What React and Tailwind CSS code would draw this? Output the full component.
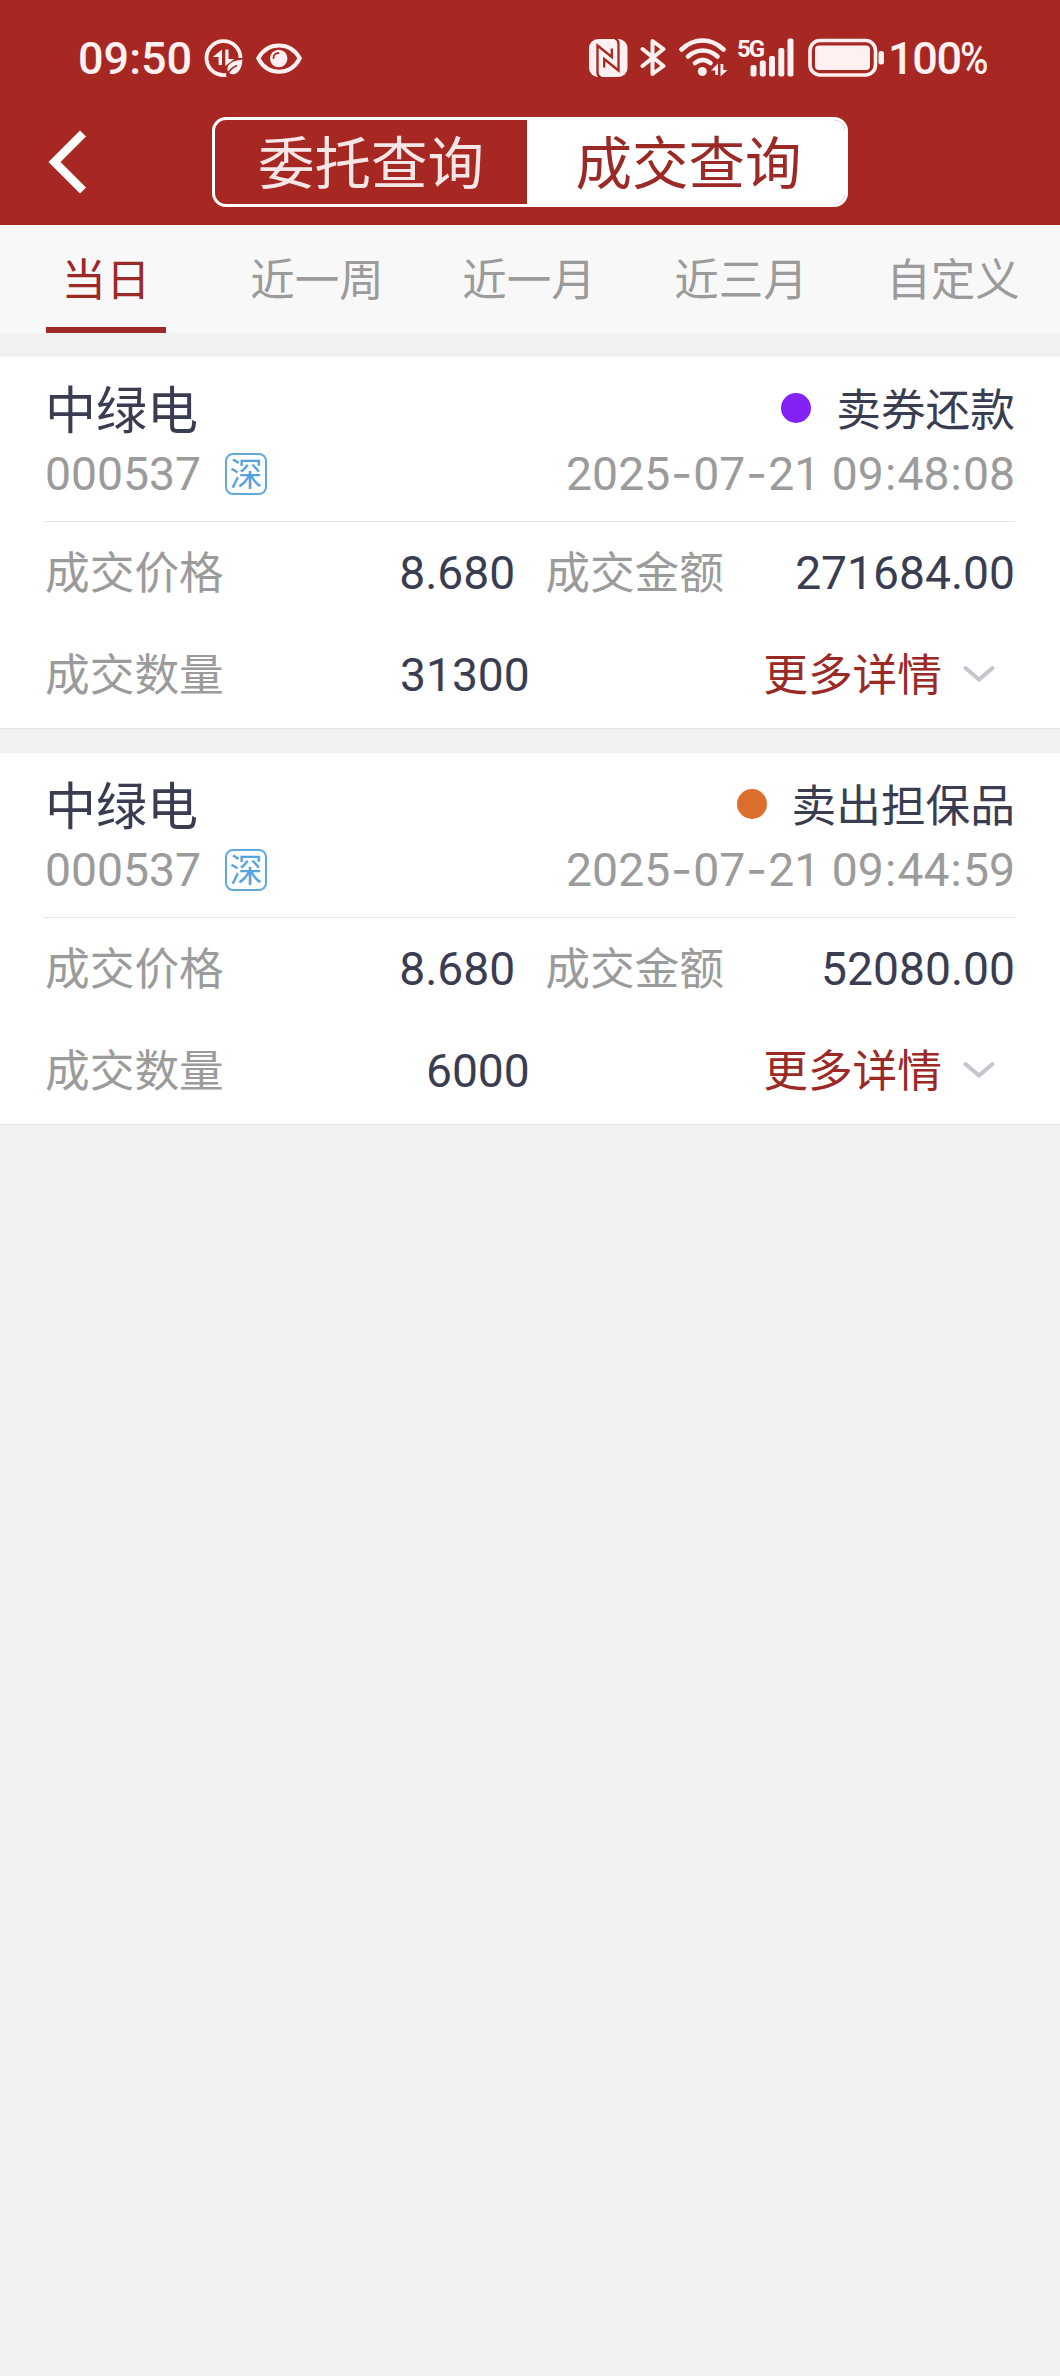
const TABS = ['当日', '近一周', '近一月', '近三月', '自定义']

const DEALS = [
  {
    id: 1,
    name: '中绿电',
    code: '000537',
    market: '深',
    type: '卖券还款',
    dot: 'bg-[#8421f4]',
    time: '2025-07-21 09:48:08',
    price: '8.680',
    amount: '271684.00',
    volume: '31300',
  },
  {
    id: 2,
    name: '中绿电',
    code: '000537',
    market: '深',
    type: '卖出担保品',
    dot: 'bg-[#dc6e2d]',
    time: '2025-07-21 09:44:59',
    price: '8.680',
    amount: '52080.00',
    volume: '6000',
  },
]

function StatusBar() {
  return (
    <div className="flex h-[99px] items-start pt-[38px] pl-[78px] text-[45px] leading-[41px] font-medium text-[#fff1f1]">
      <span className="w-[126px]">09:50</span>

      {/* data saver */}
      <svg className="h-10 w-10 shrink-0" viewBox="0 0 40 40" fill="none">
        <path d="M36.5 20A17 17 0 1 0 22.5 36.8" stroke="currentColor" strokeWidth="3.8" />
        <path d="M18 11.5V27h-3.400V19H8.800zM21.300 11.500h3.200V21h5.800l-9 7z" fill="currentColor" />
        <path d="M38.5 21.5c-8 1-14 3-15 8.5-.4 2.400.6 4 2 5 2 1.700 5.500 1.600 8-.6 3.400-3 4.500-7 5-12.900z" fill="currentColor" />
        <path d="M22.500 38c2-5 6-8.500 10.500-10.500" stroke="#a72722" strokeWidth="1.600" />
      </svg>

      {/* eye comfort */}
      <svg className="ml-[12px] h-10 w-[46px] shrink-0" viewBox="0 0 46 40" fill="none">
        <path d="M2.200 20.300C7 11.500 14 7.500 23 7.500s16 4 20.800 12.800C39 29.500 32 33.800 23 33.800S7 29.500 2.200 20.300z" stroke="currentColor" strokeWidth="4" strokeLinejoin="round" />
        <circle cx="22.700" cy="20.500" r="8.700" fill="currentColor" />
        <path d="M17.500 20a5 5 0 0 1 5-5" stroke="#a72722" strokeWidth="1.800" strokeLinecap="round" />
      </svg>

      {/* nfc */}
      <svg className="ml-[287px] h-10 w-[39px] shrink-0" viewBox="0 0 39 40" fill="none">
        <rect x="0" y="1" width="38.500" height="38" rx="9" fill="currentColor" />
        <path d="M12 39.500c-2.500-1-3.500-2.500-3.500-5V7.500L22.800 19V10.500" stroke="#a72722" strokeWidth="2.300" />
        <path d="M26 .5c2.500 1 3.500 2.500 3.500 5V32.500L15.200 21V29.500" stroke="#a72722" strokeWidth="2.300" />
      </svg>

      {/* bluetooth */}
      <svg className="ml-[12px] h-10 w-[27px] shrink-0" viewBox="0 0 27 40" fill="none" stroke="currentColor" strokeWidth="4" strokeLinecap="round" strokeLinejoin="round">
        <path d="M2.500 11 23.500 28 12.500 36V3L23.500 11 2.500 28" />
      </svg>

      {/* wifi */}
      <svg className="ml-[12px] h-10 w-[50px] shrink-0" viewBox="0 0 50 40" fill="none">
        <path d="M2.500 11.500C15-.5 32-.5 44.500 11.500" stroke="currentColor" strokeWidth="4.600" strokeLinecap="round" />
        <path d="M9 18.500c9-8 20.500-8 29.500 0" stroke="currentColor" strokeWidth="4.600" strokeLinecap="round" />
        <path d="M16 25c5-4 10.500-4 15.500 0" stroke="currentColor" strokeWidth="4.600" strokeLinecap="round" />
        <circle cx="23.300" cy="33.500" r="4.500" fill="currentColor" />
        <path d="M39 25.500v11.500h-2.800V32.500H32zM41.500 26h2.800v6h4.200l-7 6.500z" fill="currentColor" />
      </svg>

      {/* cellular */}
      <div className="relative ml-[8px] h-10 w-[58px] shrink-0">
        <span className="absolute -top-[1px] left-0 text-[24px] leading-[24px] font-bold tracking-[-2px]">5G</span>
        <svg className="h-10 w-[58px]" viewBox="0 0 58 40" fill="currentColor">
          <rect x="13.500" y="27" width="6" height="11.500" rx="2" />
          <rect x="22.800" y="22.500" width="6" height="16" rx="2" />
          <rect x="32" y="18" width="6" height="20.500" rx="2" />
          <rect x="41.300" y="10" width="6" height="28.500" rx="2" />
          <rect x="50.500" y=".5" width="6" height="38" rx="2" />
        </svg>
      </div>

      {/* battery */}
      <svg className="ml-[13px] h-10 w-[78px] shrink-0" viewBox="0 0 78 40" fill="none">
        <rect x="2" y="2.500" width="65.500" height="34.500" rx="10" stroke="currentColor" strokeWidth="3.600" />
        <rect x="7" y="7.500" width="55" height="24.500" rx="4" fill="currentColor" />
        <rect x="70.500" y="13" width="5.500" height="13.500" rx="2.500" fill="currentColor" />
      </svg>
      <span className="ml-[2px] tracking-[-1.3px]">100</span>
      <span className="-ml-[1px] origin-left scale-x-[0.86]">%</span>
    </div>
  )
}

function NavBar() {
  return (
    <div className="flex h-[126px] items-center pl-[48px]">
      <svg className="h-[64px] w-[40px] shrink-0" viewBox="0 0 40 64" fill="none">
        <path d="M35 3.500 6.500 32 35 60.500" stroke="#fff" strokeWidth="8.500" />
      </svg>
      <div className="ml-[124px] flex h-[90px] w-[636px] overflow-hidden rounded-[14px] border-[3px] border-white text-[56.5px] leading-none">
        <button className="w-[312px] pt-[6px] text-[#f6e6e6]">委托查询</button>
        <button className="flex-1 bg-white pt-[6px] pl-[5px] text-[#9b2a27]">成交查询</button>
      </div>
    </div>
  )
}

function PeriodTabs() {
  return (
    <div className="grid h-[108px] grid-cols-5 bg-[#f8f8f8] text-[44.5px] leading-none">
      {TABS.map((tab, i) => (
        <button
          key={tab}
          className={
            i === 0
              ? 'flex flex-col items-center justify-between pt-[34px] text-[#9b2a27]'
              : 'flex flex-col items-center justify-between pt-[34px] pr-[2px] text-[#9b9b9b]'
          }
        >
          {tab}
          {i === 0 && <span className="h-[6px] w-[120px] bg-[#9f2a28]" />}
        </button>
      ))}
    </div>
  )
}

// digits keep their natural width, the separators get wider cells
function DateTime({ value }) {
  return (
    <span>
      {value.split('').map((ch, i) => {
        if (ch === '-') {
          return (
            <span key={i} className="inline-block w-[23px] text-center font-['Inter'] leading-none">
              -
            </span>
          )
        }
        if (ch === ':') {
          return (
            <span key={i} className="inline-block w-[13.5px] text-center leading-none">
              :
            </span>
          )
        }
        return ch
      })}
    </span>
  )
}

function DealCard({ deal }) {
  return (
    <section className="mt-6 h-[372px] border-b border-[#e2e2e2] bg-white px-[45px] pt-[26px] text-[44.7px] text-[#3a3d52]">
      <div className="flex h-[56px] items-center justify-between leading-[56px]">
        <h2 className="pt-[2px] text-[51px]">{deal.name}</h2>
        <div className="flex items-center">
          <span className={`mr-[25px] mb-[6px] size-[30px] rounded-full ${deal.dot}`} />
          <span>{deal.type}</span>
        </div>
      </div>
      <div className="flex h-[83px] items-start justify-between border-b border-[#e4e4e4] pt-[8px] text-[46.3px] leading-[54px] text-[#9b9b9b]">
        <div className="flex items-center">
          <span className="w-[180px]">{deal.code}</span>
          <span className="flex size-[42px] items-center justify-center rounded-[8px] border-2 border-[#62a9dc] text-[33px] leading-none text-[#55a3de]">
            {deal.market}
          </span>
        </div>
        <DateTime value={deal.time} />
      </div>
      <div className="flex h-[98px] items-center pt-[6px]">
        <span className="pt-px text-[#9b9b9b]">成交价格</span>
        <span className="ml-auto w-[200px] pb-px text-right text-[46.2px]">{deal.price}</span>
        <span className="ml-[30px] pt-px text-[#9b9b9b]">成交金额</span>
        <span className="w-[291px] pb-px text-right text-[46.2px]">{deal.amount}</span>
      </div>
      <div className="flex h-[106px] items-center pt-[6px]">
        <span className="pt-px text-[#9b9b9b]">成交数量</span>
        <span className="w-[306px] pb-px text-right text-[46.2px]">{deal.volume}</span>
        <button className="ml-auto flex items-center pt-px pr-[19px] text-[#9b2a27]">
          更多详情
          <svg className="mb-[5px] ml-[20px] h-[20px] w-[34px]" viewBox="0 0 34 20" fill="none">
            <path d="M3.500 4 17 15.500 30.500 4" stroke="#c5c6cd" strokeWidth="4" strokeLinecap="round" />
          </svg>
        </button>
      </div>
    </section>
  )
}

export default function App() {
  return (
    <div className="min-h-[2376px] w-[1060px] bg-[#f1f1f1] font-[Roboto,'Noto_Sans_CJK_SC',sans-serif]">
      <header className="bg-[#a72722]">
        <StatusBar />
        <NavBar />
      </header>
      <PeriodTabs />
      <main>
        {DEALS.map((deal) => (
          <DealCard key={deal.id} deal={deal} />
        ))}
      </main>
    </div>
  )
}
